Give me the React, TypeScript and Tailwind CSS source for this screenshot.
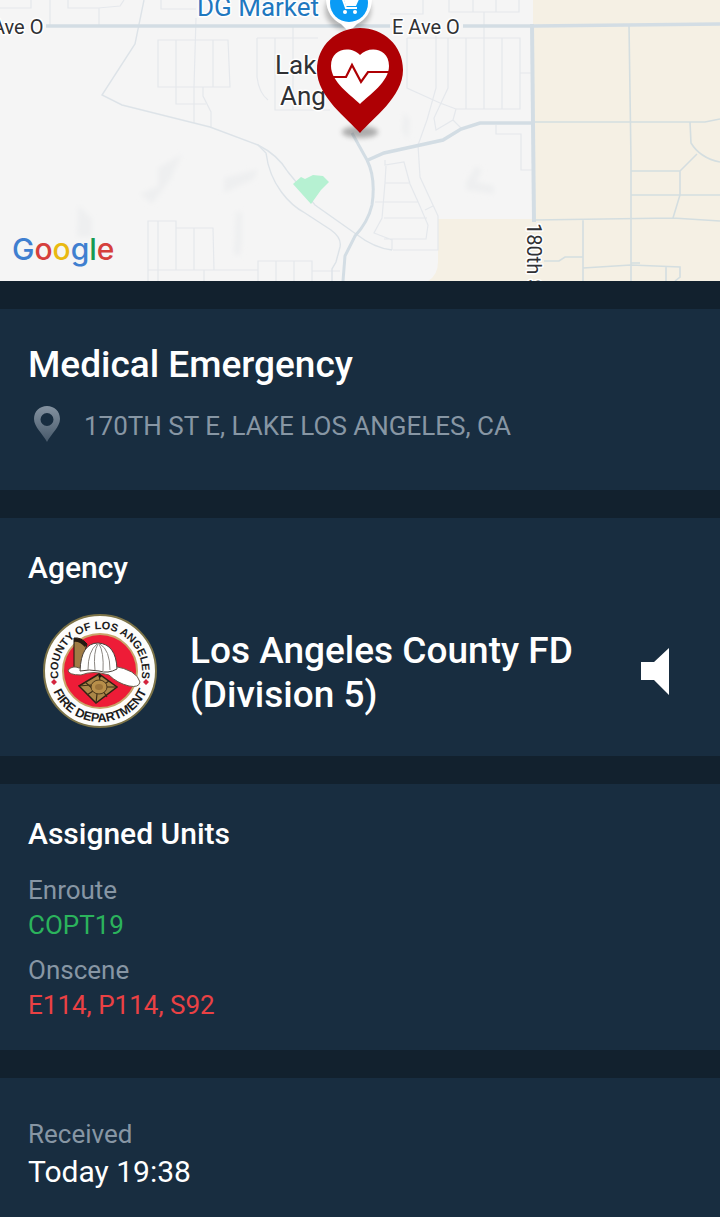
import type { ReactNode } from "react";

function StreetMap() {
  return (
    <svg
      className="block h-[281px] w-full"
      viewBox="0 0 720 281"
      preserveAspectRatio="xMidYMid slice"
      role="img"
      aria-label="Map of the incident location"
      fontFamily="Roboto, sans-serif"
    >
      <defs>
        <filter id="soft" x="-50%" y="-50%" width="200%" height="200%">
          <feGaussianBlur stdDeviation="2.5" />
        </filter>
      </defs>
      <rect width="720" height="281" fill="#f5f5f5" />
      <path d="M533 0H720V281H428Q438 275 438 262V219H533Z" fill="#f5f0e4" />

      <g fill="#eeeff0" filter="url(#soft)">
        <path d="M158 168l24-14-12 26-18 24-12-10 18-8z" />
        <path d="M224 178l34-9-4 10-30 14z" />
        <path d="M78 205l14 14v18H77z" />
        <path d="M236 212h6v30l-2 14-6-2z" />
        <path d="M466 182l10-16 6 4-6 12 18 4v8l-28-4z" />
        <path d="M404 112l6 8-2 20-6-10z" />
      </g>

      <g fill="none" stroke="#e5e8ec" strokeWidth="1.2">
        <path d="M0 8H31V0M50 0V26M68 0V8H98L120 6 124 0M99 8V26M161 0V9H196" />
        <path d="M158 40H228L230 87H158ZM176 40V104H206M196 18L194 87V123M213 40V87M203 87V96L211 112 211 127" />
        <path d="M257 38H318M257 38V77Q259 93 268 100M275 38V110H330M293 25V110" />
        <path d="M148 281V221H176V270M158 221V281M176 228H213L214 270M194 228V270M148 270H258M204 270V281" />
        <path d="M258 281V261H312V281M276 261V281M294 261V281M312 271H340" />
        <path d="M449 0V12H519V0M473 0V12M496 0V12M423 0V14H390M407 38H520V109H456" />
        <path d="M407 38V88L440 103 456 109M448 38V88L434 118 436 130 453 120 461 128M456 109L453 120M466 38V109M484 12V109M502 38V109M520 73H532M496 125V134H521V170H532M436 25V88L427 120 418 145 420 177 438 216V250H393" />
        <path d="M385 160V165L404 162 410 184 419 204 428 225 426 239H384M386 166L385 183H409M375 202H418M384 218H427M385 183L382 218 374 233 392 240V250M425 210L433 206" />
      </g>
      <g fill="none" stroke="#dde3e8" strokeWidth="1.4">
        <path d="M144 0L135 44 102 95 122 105 194 123 210 127 258 145Q278 155 288 172L315 205 356 234Q374 248 392 250" />
        <path d="M258 145L266 153C270 185 290 205 305 213L331 230Q342 238 340 247L336 262 332 269V281" />
      </g>

      <g fill="none" stroke="#d4dee0" strokeWidth="1.6">
        <path d="M534 122H705L720 119M629 25L631 160V281" />
        <path d="M690 122L691 143Q700 158 720 162M697 154L680 171V195L673 218M631 171H680M631 195H720M534 220L673 218 720 221M583 220V281M544 261H559L565 257H583M583 268L631 265 680 267V277L675 281M666 266V281M631 263H640" />
      </g>
      <g fill="none" stroke="#d3dde4">
        <path d="M46 26H390M463 26H534L720 24" strokeWidth="3.5" />
        <path d="M532 24L534 222" strokeWidth="4" />
        <path d="M352 133L367 160Q376 178 372 205Q368 222 355 236L345 256 343 281" strokeWidth="3" />
        <path d="M368 160L384 153 443 140 461 129 480 123H534" strokeWidth="3.5" />
      </g>
      <path d="M293 184l8-7 4 2 8-4 10 1 6 6-8 8-10 14z" fill="#b6f1d2" />

      <g stroke="#ffffff" strokeWidth="3" strokeLinejoin="round" paintOrder="stroke">
        <text x="-8" y="34" fontSize="20" fill="#303134">Ave O</text>
        <text x="392" y="34" fontSize="20" fill="#303134">E Ave O</text>
        <text x="197" y="16" fontSize="26" fill="#1f78bf">DG Market</text>
        <text x="275" y="74" fontSize="26" fill="#303134">Lak</text>
        <text x="280" y="105" fontSize="26" fill="#303134">Ang</text>
        <text transform="translate(527 223) rotate(90)" fontSize="20" fill="#303134">180th S</text>
      </g>

      <ellipse cx="348" cy="10" rx="23" ry="20" fill="#000000" opacity="0.25" filter="url(#soft)" />
      <path d="M326 0Q327 17 341 24L349 32 357 24Q371 17 372 0Z" fill="#ffffff" />
      <circle cx="349" cy="3" r="19" fill="#0a9bf5" />
      <path d="M338 -3H342L346 8H357" fill="none" stroke="#ffffff" strokeWidth="2" />
      <path d="M343 -3H360L356 6H346Z" fill="#ffffff" />
      <circle cx="345" cy="12" r="2" fill="#ffffff" />
      <circle cx="355" cy="12" r="2" fill="#ffffff" />

      <ellipse cx="360" cy="132" rx="18" ry="6" fill="#555555" opacity="0.45" filter="url(#soft)" />
      <path
        d="M360 133C348 119 317 97 317 70C317 45 337 28 360 28S403 45 403 70C403 97 372 119 360 133Z"
        fill="#ae0004"
      />
      <path
        d="M360 104C351 95 331 82 331 66C331 47 352 46 360 55C368 46 389 47 389 66C389 82 369 95 360 104Z"
        fill="#ffffff"
      />
      <path d="M331 77H346L352 65 361 82 368 72H389" fill="none" stroke="#ae0004" strokeWidth="2.2" />
    </svg>
  );
}

function GoogleMark() {
  return (
    <a
      href="#google"
      className="absolute bottom-[13px] left-[12px] font-[Inter,sans-serif] text-[30px] leading-[38px] font-medium"
    >
      <span className="text-[#3f7fd0]">G</span>
      <span className="text-[#d5403c]">o</span>
      <span className="text-[#e9b910]">o</span>
      <span className="text-[#3f7fd0]">g</span>
      <span className="text-[#159a52]">l</span>
      <span className="text-[#d5403c]">e</span>
    </a>
  );
}

function DepartmentSeal() {
  return (
    <svg
      className="size-[114px] shrink-0"
      viewBox="0 0 114 114"
      role="img"
      aria-label="County fire department seal"
      fontFamily="Liberation Sans, sans-serif"
      fontWeight="bold"
    >
      <defs>
        <path id="sealTop" d="M20.6 78A42 42 0 1 1 93.4 78" />
        <path id="sealBottom" d="M6 57A51 51 0 0 0 108 57" />
      </defs>
      <circle cx="57" cy="57" r="56" fill="#fdfdfb" stroke="#7d7448" strokeWidth="2" />
      <circle cx="57" cy="57" r="37" fill="#ee1c37" stroke="#c9a46a" strokeWidth="2" />
      <text fill="#1c1c1c" fontSize="11">
        <textPath href="#sealTop" startOffset="50%" textAnchor="middle">
          COUNTY OF LOS ANGELES
        </textPath>
      </text>
      <text fill="#1c1c1c" fontSize="12.5">
        <textPath href="#sealBottom" startOffset="50%" textAnchor="middle">
          FIRE DEPARTMENT
        </textPath>
      </text>
      <path d="M11 65l3 3-3 3-3-3zM103 65l3 3-3 3-3-3z" fill="#d3243c" />
      <path d="M31 24Q38 23 44 30L37 56 31 54Z" fill="#a07c45" stroke="#1d1510" strokeWidth="1" />
      <path d="M31 24Q38 23 44 30L42 33Q36 27 31 28Z" fill="#241a12" />
      <path
        d="M25 56Q30 51 36 54L70 52Q94 56 97 68Q96 74 86 72Q74 69 66 61Q50 56 38 61Q25 61 25 56Z"
        fill="#ffffff"
        stroke="#6b5b4b"
        strokeWidth="1"
      />
      <path
        d="M37 57Q38 29 55 29Q73 30 74 55Q65 60 56 57Q46 55 37 57Z"
        fill="#ffffff"
        stroke="#4b423c"
        strokeWidth="1"
      />
      <path
        d="M45 56Q45 37 54 30M52 56Q50 38 55 30M60 57Q61 38 56 30M67 56Q67 36 57 30"
        fill="none"
        stroke="#8b8782"
        strokeWidth="1"
      />
      <path d="M36 72L56 60 74 73 53 89Z" fill="#ab8748" stroke="#2e2313" strokeWidth="1.5" />
      <path
        d="M36 72L48 71M56 60L57 67M74 73L64 73M53 89L54 80M42 68L50 75M66 67L60 71M44 81L50 77M64 83L60 77"
        stroke="#3b2c15"
        strokeWidth="1.2"
      />
      <ellipse cx="56" cy="73" rx="8" ry="7" fill="#b88f4a" stroke="#4d391b" strokeWidth="1" />
      <ellipse cx="56" cy="73" rx="4" ry="3" fill="#9c743a" />
      <circle cx="57" cy="62" r="1.5" fill="#1d1510" />
    </svg>
  );
}

function Card({ className, children }: { className: string; children: ReactNode }) {
  return <section className={`bg-[#182d40] px-7 ${className}`}>{children}</section>;
}

function UnitGroup({ label, units, tone }: { label: string; units: string; tone: string }) {
  return (
    <div>
      <dt className="text-[#8796a4]">{label}</dt>
      <dd className={tone}>{units}</dd>
    </div>
  );
}

export default function App() {
  return (
    <main className="flex min-h-screen flex-col gap-7 bg-[#12212e] font-[Roboto,sans-serif] text-white">
      <div className="relative overflow-hidden">
        <StreetMap />
        <GoogleMark />
      </div>

      <Card className="pt-[34px] pb-12">
        <h1 className="text-[37px] leading-[44px] font-medium">Medical Emergency</h1>
        <div className="mt-[19px] flex items-center text-[26px] leading-8 text-[#8796a4]">
          <svg className="mr-5 ml-1 h-9 w-8 shrink-0" viewBox="0 0 32 36" aria-hidden="true">
            <defs>
              <linearGradient id="pinShade" x1="0" y1="0" x2="0" y2="1">
                <stop offset="0" stopColor="#8492a0" />
                <stop offset="1" stopColor="#47596a" />
              </linearGradient>
            </defs>
            <path
              fill="url(#pinShade)"
              fillRule="evenodd"
              d="M15 0C22 0 28 5 28 13C28 21 19 28 15 36C11 28 2 21 2 13C2 5 8 0 15 0ZM15 7A6.5 6.5 0 1 0 15 20A6.5 6.5 0 1 0 15 7Z"
            />
          </svg>
          <p className="pt-1">170TH ST E, LAKE LOS ANGELES, CA</p>
        </div>
      </Card>

      <Card className="pt-8 pb-7">
        <h2 className="text-[30px] leading-9 font-medium">Agency</h2>
        <div className="mt-7 flex items-center pr-[22px] pl-[15px]">
          <DepartmentSeal />
          <p className="ml-[33px] flex-1 pt-1 text-[37px] leading-[44px] font-medium">
            Los Angeles County FD (Division 5)
          </p>
          <button type="button" aria-label="Listen" className="shrink-0">
            <svg className="h-12 w-[29px]" viewBox="0 0 29 48" aria-hidden="true">
              <path d="M0 15H13L28 1V48L13 33H0Z" fill="#ffffff" />
            </svg>
          </button>
        </div>
      </Card>

      <Card className="pt-8 pb-[27px]">
        <h2 className="text-[30px] leading-9 font-medium">Assigned Units</h2>
        <dl className="mt-[21px] flex flex-col gap-[10px] text-[26px] leading-[35px]">
          <UnitGroup label="Enroute" units="COPT19" tone="text-[#2bb35c]" />
          <UnitGroup label="Onscene" units="E114, P114, S92" tone="text-[#ea4144]" />
        </dl>
      </Card>

      <Card className="flex-1 pt-[39px] pb-[26px]">
        <dl>
          <dt className="text-[26px] leading-[35px] text-[#8796a4]">Received</dt>
          <dd className="pt-[2px] text-[30px] leading-9">Today 19:38</dd>
        </dl>
      </Card>
    </main>
  );
}
